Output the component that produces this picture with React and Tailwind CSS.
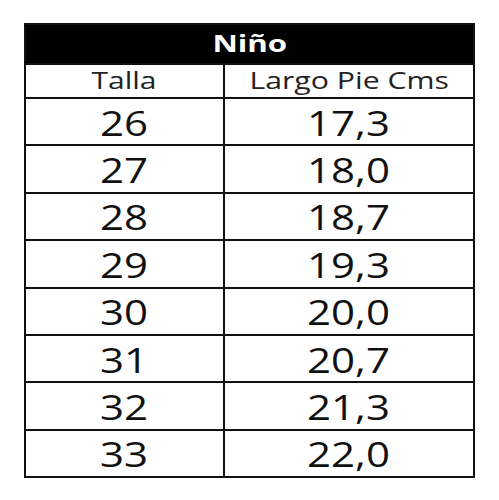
import React from "react";

const rows = [
	["26", "17,3"],
	["27", "18,0"],
	["28", "18,7"],
	["29", "19,3"],
	["30", "20,0"],
	["31", "20,7"],
	["32", "21,3"],
	["33", "22,0"],
];

function App() {
	return (
		<div className="w-[499px] h-[500px] bg-white pt-[23px] pl-[24px] font-['Open_Sans',sans-serif]">
			<table className="w-[449px] table-fixed border-collapse border-2 border-[#111]">
				<colgroup>
					<col className="w-[199px]" />
					<col className="w-[250px]" />
				</colgroup>
				<thead>
					{/* TITLE */}
					<tr className="h-[40px] bg-black">
						<th colSpan={2} className="p-0 text-center text-white">
							<span className="inline-block scale-x-[1.3] text-[24px] font-bold leading-none">
								Niño
							</span>
						</th>
					</tr>
					{/* COLUMN HEADERS */}
					<tr className="h-[34px]">
						<th className="p-0 border-2 border-[#111] text-center font-normal text-[#222]">
							<span className="inline-block scale-x-[1.25] text-[24px] leading-none">
								Talla
							</span>
						</th>
						<th className="p-0 border-2 border-[#111] text-center font-normal text-[#222]">
							<span className="inline-block scale-x-[1.26] text-[24px] leading-none">
								Largo Pie Cms
							</span>
						</th>
					</tr>
				</thead>
				<tbody>
					{rows.map(([talla, largo]) => (
						<tr key={talla} className="h-[47.4px]">
							<td className="p-0 pt-[3px] border-2 border-[#111] text-center text-[#111]">
								<span className="inline-block scale-x-[1.2] text-[35px] leading-none">
									{talla}
								</span>
							</td>
							<td className="p-0 pt-[3px] border-2 border-[#111] text-center text-[#111]">
								<span className="inline-block scale-x-[1.2] text-[35px] leading-none">
									{largo}
								</span>
							</td>
						</tr>
					))}
				</tbody>
			</table>
		</div>
	);
}

export default App;
